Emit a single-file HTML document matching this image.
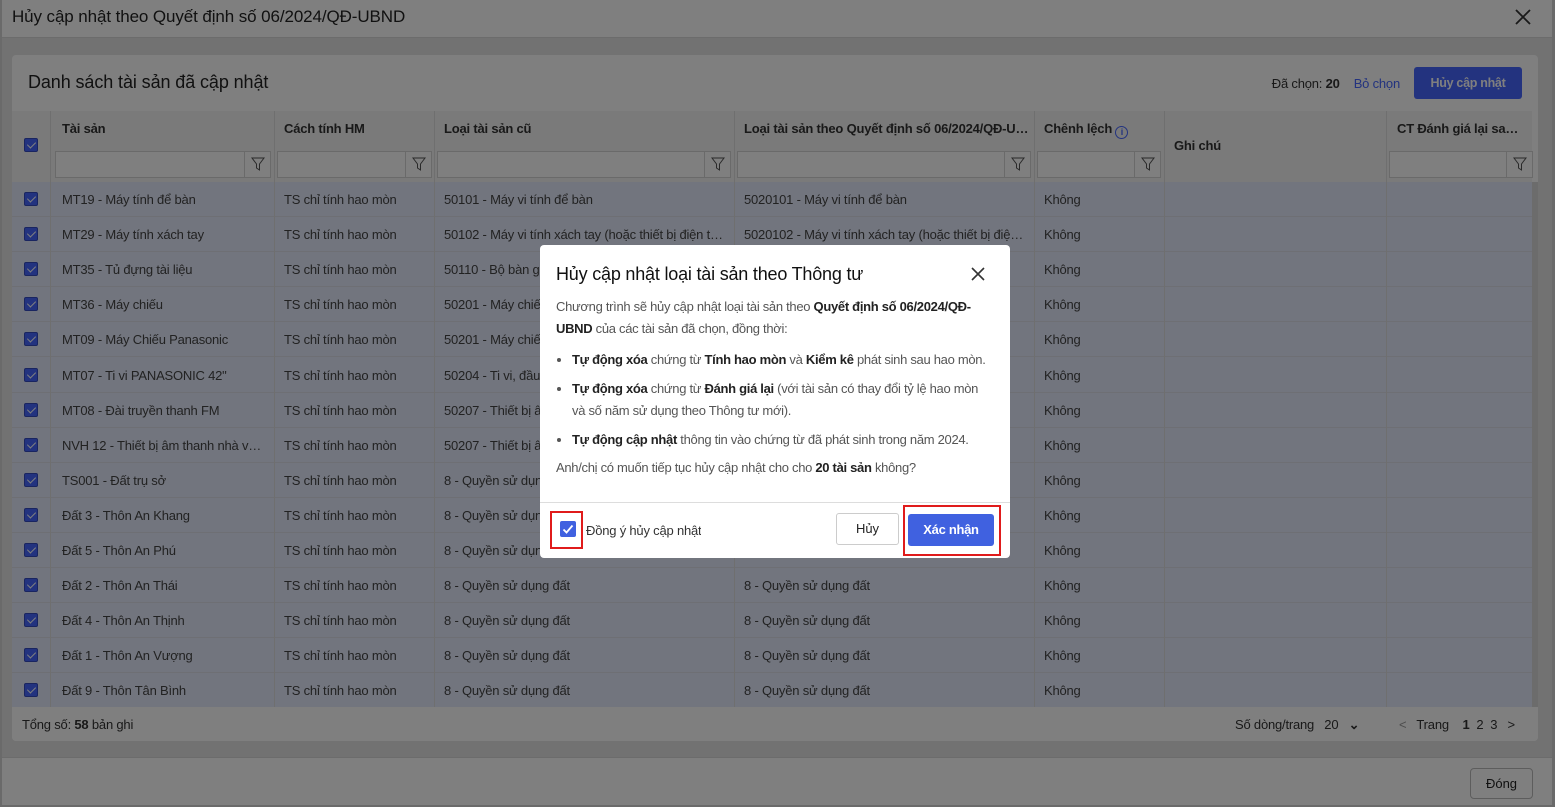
<!DOCTYPE html>
<html><head><meta charset="utf-8">
<style>
*{box-sizing:border-box;margin:0;padding:0}
body{width:1555px;height:807px;overflow:hidden;background:#d4d4d4;font-family:"Liberation Sans",Arial,sans-serif;font-size:13px;color:#333;position:relative}
.win{position:absolute;left:2px;top:0;width:1550px;height:805px;background:#e4e4e4}
.tb{position:absolute;left:0;top:0;width:100%;height:38px;background:#fff;border-bottom:1px solid #d8d8d8}
.tb h1{position:absolute;left:10px;top:7px;font-size:17px;font-weight:normal;color:#222;letter-spacing:-0.1px}
.card{position:absolute;left:10px;top:55px;width:1526px;height:686px;background:#fff;border-radius:4px;overflow:hidden}
.card h2{position:absolute;left:16px;top:17px;font-size:18px;font-weight:normal;color:#222;letter-spacing:-0.1px}
.sel{position:absolute;right:138px;top:21px;font-size:13px;color:#333;letter-spacing:-0.2px}
.sel b{margin-right:14px}.sel span{color:#4666ff}
.btn1{position:absolute;left:1402px;top:12px;width:108px;height:32px;background:#4666ff;border-radius:3px;color:#fff;font-weight:bold;font-size:12.5px;text-align:center;line-height:32px;letter-spacing:-0.3px}
.cell{position:absolute;white-space:nowrap;overflow:hidden;text-overflow:ellipsis;letter-spacing:-0.2px}
.hd{position:absolute;top:56px;height:71px;background:#f4f4f4}
.vl{position:absolute;width:1px;background:#dedede}
.flt{position:absolute;top:96px;height:27px;border:1px solid #d4d4d4;background:#fff}
.flt i{position:absolute;right:0;top:0;width:26px;height:25px;border-left:1px solid #d4d4d4}
.flt svg{position:absolute;left:6px;top:5px}
.rows{position:absolute;left:0;top:127px;width:1520px;height:525px;background:#e4eafc}
.row{position:absolute;left:0;width:1520px;height:35px;border-bottom:1px solid #dcdfe8}
.cb{position:absolute;width:14px;height:14px;background:#4666ff;border:1px solid #354ac0;border-radius:2px}
.cb:after{content:"";position:absolute;left:3.5px;top:1px;width:4px;height:7px;border:solid #fff;border-width:0 1.5px 1.5px 0;transform:rotate(45deg)}
.t{color:#444;font-size:13px}
.ft{position:absolute;left:0;top:652px;width:1526px;height:34px;background:#fff}
.bot{position:absolute;left:0;top:757px;width:100%;height:48px;background:#fff;border-top:1px solid #d8d8d8}
.dong{position:absolute;left:1468px;top:10px;width:63px;height:31px;border:1px solid #bbb;border-radius:4px;text-align:center;line-height:29px;color:#222}
.ov{position:absolute;left:0;top:0;width:1555px;height:807px;background:rgba(0,0,0,0.5)}
.modal{position:absolute;left:540px;top:245px;width:470px;height:313px;background:#fff;border-radius:4px;color:#333}
.modal h3{position:absolute;left:16px;top:19px;font-size:18px;font-weight:normal;color:#111;letter-spacing:-0.2px}
.mb{position:absolute;left:16px;top:51px;width:445px;font-size:13px;line-height:22px;color:#555;letter-spacing:-0.3px}
.mb b{color:#222}
.mb ul{margin:9px 0 0 0;padding-left:16px}
.mb li{margin-bottom:7px}
.red{position:absolute;border:2px solid #e01b1b}
</style></head><body>
<div class="win">
<div class="tb"><h1>Hủy cập nhật theo Quyết định số 06/2024/QĐ-UBND</h1>
<svg style="position:absolute;left:1513px;top:9px" width="16" height="16"><path d="M1 1L15 15M15 1L1 15" stroke="#333" stroke-width="1.8"/></svg></div>
<div class="card">
<h2>Danh sách tài sản đã cập nhật</h2>
<div class="sel">Đã chọn: <b>20</b><span>Bỏ chọn</span></div>
<div class="btn1">Hủy cập nhật</div>
<div class="hd" style="left:0;width:1520px"></div>
<div class="cb" style="left:12px;top:83px"></div>
<div class="cell" style="left:50px;top:66px;font-weight:bold">Tài sản</div>
<div class="cell" style="left:272px;top:66px;font-weight:bold">Cách tính HM</div>
<div class="cell" style="left:432px;top:66px;font-weight:bold">Loại tài sản cũ</div>
<div class="cell" style="left:732px;top:66px;font-weight:bold;width:290px">Loại tài sản theo Quyết định số 06/2024/QĐ-UBND</div>
<div class="cell" style="left:1032px;top:66px;font-weight:bold">Chênh lệch <span style="display:inline-block;width:13px;height:13px;border:1.3px solid #4666ff;border-radius:50%;color:#4666ff;font-size:9px;text-align:center;line-height:11px;vertical-align:-2px;letter-spacing:0">i</span></div>
<div class="cell" style="left:1162px;top:83px;font-weight:bold">Ghi chú</div>
<div class="cell" style="left:1385px;top:66px;font-weight:bold;width:128px">CT Đánh giá lại sau cập nhật</div>
<div class="flt" style="left:43px;width:216px"><i><svg width="14" height="15"><path d="M1 1H13L8.5 7V13L5.5 11V7Z" fill="none" stroke="#555" stroke-width="1"/></svg></i></div>
<div class="flt" style="left:265px;width:155px"><i><svg width="14" height="15"><path d="M1 1H13L8.5 7V13L5.5 11V7Z" fill="none" stroke="#555" stroke-width="1"/></svg></i></div>
<div class="flt" style="left:425px;width:294px"><i><svg width="14" height="15"><path d="M1 1H13L8.5 7V13L5.5 11V7Z" fill="none" stroke="#555" stroke-width="1"/></svg></i></div>
<div class="flt" style="left:725px;width:294px"><i><svg width="14" height="15"><path d="M1 1H13L8.5 7V13L5.5 11V7Z" fill="none" stroke="#555" stroke-width="1"/></svg></i></div>
<div class="flt" style="left:1025px;width:124px"><i><svg width="14" height="15"><path d="M1 1H13L8.5 7V13L5.5 11V7Z" fill="none" stroke="#555" stroke-width="1"/></svg></i></div>
<div class="flt" style="left:1377px;width:144px"><i><svg width="14" height="15"><path d="M1 1H13L8.5 7V13L5.5 11V7Z" fill="none" stroke="#555" stroke-width="1"/></svg></i></div>
<div class="rows" id="r"></div>
<div class="vl" style="left:38px;top:56px;height:596px"></div>
<div class="vl" style="left:262px;top:56px;height:596px"></div>
<div class="vl" style="left:422px;top:56px;height:596px"></div>
<div class="vl" style="left:722px;top:56px;height:596px"></div>
<div class="vl" style="left:1022px;top:56px;height:596px"></div>
<div class="vl" style="left:1152px;top:56px;height:596px"></div>
<div class="vl" style="left:1374px;top:56px;height:596px"></div>
<div style="position:absolute;left:1520px;top:127px;width:6px;height:525px;background:#d8d8d8"></div>
<div class="ft"><div class="cell" style="left:10px;top:10px">Tổng số: <b>58</b> bản ghi</div>
<div class="cell" style="left:1223px;top:10px">Số dòng/trang &nbsp;&nbsp;20 &nbsp;&nbsp;<b>⌄</b></div>
<div class="cell" style="left:1387px;top:10px"><span style="color:#999">&lt;</span> &nbsp; Trang &nbsp;&nbsp; <b>1</b> &nbsp;2 &nbsp;3 &nbsp;&nbsp;&gt;</div></div>
</div>
<div class="bot"><div class="dong">Đóng</div></div>
</div>
<div class="ov"></div>
<div class="modal">
<h3>Hủy cập nhật loại tài sản theo Thông tư</h3>
<svg style="position:absolute;left:431px;top:22px" width="14" height="14"><path d="M1 1L13 13M13 1L1 13" stroke="#333" stroke-width="1.6"/></svg>
<div class="mb">Chương trình sẽ hủy cập nhật loại tài sản theo <b>Quyết định số 06/2024/QĐ-UBND</b> của các tài sản đã chọn, đồng thời:
<ul><li><b>Tự động xóa</b> chứng từ <b>Tính hao mòn</b> và <b>Kiểm kê</b> phát sinh sau hao mòn.</li>
<li><b>Tự động xóa</b> chứng từ <b>Đánh giá lại</b> (với tài sản có thay đổi tỷ lệ hao mòn<br>và số năm sử dụng theo Thông tư mới).</li>
<li><b>Tự động cập nhật</b> thông tin vào chứng từ đã phát sinh trong năm 2024.</li></ul>
<div style="margin-top:-1px">Anh/chị có muốn tiếp tục hủy cập nhật cho cho <b>20 tài sản</b> không?</div></div>
<div style="position:absolute;left:0;top:257px;width:470px;height:1px;background:#ddd"></div>
<div style="position:absolute;left:20px;top:276px;width:16px;height:16px;background:#4061e0;border-radius:2px"><svg width="16" height="16"><path d="M3.5 8.5L6.5 11.5L12.5 4.5" stroke="#fff" stroke-width="1.8" fill="none"/></svg></div>
<div class="red" style="left:10px;top:266px;width:33px;height:38px"></div>
<div class="cell" style="left:46px;top:278px;color:#333">Đồng ý hủy cập nhật</div>
<div style="position:absolute;left:296px;top:268px;width:63px;height:32px;border:1px solid #ccc;border-radius:3px;text-align:center;line-height:30px;color:#222">Hủy</div>
<div style="position:absolute;left:368px;top:269px;width:86px;height:32px;background:#4061e0;border-radius:3px;text-align:center;line-height:32px;color:#fff;font-weight:bold;letter-spacing:-0.3px">Xác nhận</div>
<div class="red" style="left:363px;top:260px;width:98px;height:51px"></div>
</div>
<script>
var d=[["MT19 - Máy tính để bàn","50101 - Máy vi tính để bàn","5020101 - Máy vi tính để bàn"],
["MT29 - Máy tính xách tay","50102 - Máy vi tính xách tay (hoặc thiết bị điện tử tương đương)","5020102 - Máy vi tính xách tay (hoặc thiết bị điện tử)"],
["MT35 - Tủ đựng tài liệu","50110 - Bộ bàn ghế",""],["MT36 - Máy chiếu","50201 - Máy chiếu",""],
["MT09 - Máy Chiếu Panasonic","50201 - Máy chiếu",""],["MT07 - Ti vi PANASONIC 42\"","50204 - Ti vi, đầu video","Thiết bị âm thanh các loại thiết bị Thiết ..."],
["MT08 - Đài truyền thanh FM","50207 - Thiết bị âm thanh",""],["NVH 12 - Thiết bị âm thanh nhà văn hóa","50207 - Thiết bị âm thanh",""],
["TS001 - Đất trụ sở","8 - Quyền sử dụng đất","8 - Quyền sử dụng đất"],["Đất 3 - Thôn An Khang","8 - Quyền sử dụng đất","8 - Quyền sử dụng đất"],
["Đất 5 - Thôn An Phú","8 - Quyền sử dụng đất","8 - Quyền sử dụng đất"],["Đất 2 - Thôn An Thái","8 - Quyền sử dụng đất","8 - Quyền sử dụng đất"],
["Đất 4 - Thôn An Thịnh","8 - Quyền sử dụng đất","8 - Quyền sử dụng đất"],["Đất 1 - Thôn An Vượng","8 - Quyền sử dụng đất","8 - Quyền sử dụng đất"],
["Đất 9 - Thôn Tân Bình","8 - Quyền sử dụng đất","8 - Quyền sử dụng đất"]];
var h="";d.forEach(function(r,i){var y=i*35.1;h+='<div class="row" style="top:'+y+'px"><div class="cb" style="left:12px;top:10px"></div>'+
'<div class="cell t" style="left:50px;top:10px;width:206px">'+r[0]+'</div><div class="cell t" style="left:272px;top:10px">TS chỉ tính hao mòn</div>'+
'<div class="cell t" style="left:432px;top:10px;width:284px">'+r[1]+'</div><div class="cell t" style="left:732px;top:10px;width:284px">'+r[2]+'</div>'+
'<div class="cell t" style="left:1032px;top:10px">Không</div></div>'});
document.getElementById("r").innerHTML=h;
</script>
</body></html>
